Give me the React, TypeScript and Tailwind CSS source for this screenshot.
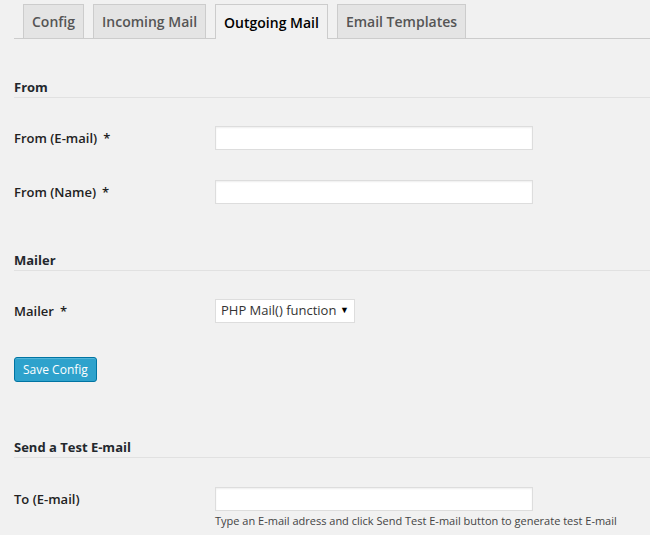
import * as React from 'react';

const font = { fontFamily: '"Open Sans", "Noto Sans", sans-serif' };

const tabs = ['Config', 'Incoming Mail', 'Outgoing Mail', 'Email Templates'];

function SectionHeading({ title, className = '' }: { title: string; className?: string }) {
  return (
    <h3 className={`border-b border-[#e1e1e1] pb-[1px] text-[13px] font-bold leading-[18px] text-[#23282d] ${className}`}>
      {title}
    </h3>
  );
}

function FieldRow({
  label,
  required,
  children,
  className = '',
}: {
  label: string;
  required?: boolean;
  children: React.ReactNode;
  className?: string;
}) {
  return (
    <div className={`flex items-start ${className}`}>
      <label className="w-[201px] shrink-0 pt-[3px] text-[13px] font-semibold leading-[18px] text-[#222]">
        {label}
        {required && <span className="ml-[6px]">*</span>}
      </label>
      <div className="flex flex-col">{children}</div>
    </div>
  );
}

function TextInput() {
  return (
    <input
      type="text"
      className="h-[24px] w-[318px] border border-[#dddddd] bg-white px-2 text-[13px] outline-none shadow-[inset_0_1px_2px_rgba(0,0,0,0.07)]"
    />
  );
}

export default function App() {
  const [active, setActive] = React.useState('Outgoing Mail');

  return (
    <div style={font} className="min-h-[535px] w-[650px] overflow-hidden bg-[#f1f1f1] pl-[14px]">
      {/* Tabs */}
      <div className="flex items-end border-b border-[#cccccc] pl-[9px] pt-[4px]">
        {tabs.map((tab) => {
          const isActive = tab === active;
          return (
            <button
              key={tab}
              onClick={() => setActive(tab)}
              className={
                isActive
                  ? 'mr-[9px] -mb-px h-[35px] border border-b-0 border-[#cccccc] bg-[#f1f1f1] px-[8px] text-[14px] font-semibold text-black'
                  : 'mr-[9px] h-[34px] border border-b-0 border-[#cccccc] bg-[#e4e4e4] px-[8px] text-[14px] font-semibold text-[#555]'
              }
            >
              {tab}
            </button>
          );
        })}
      </div>

      {/* From */}
      <SectionHeading title="From" className="mt-[39px]" />
      <FieldRow label="From (E-mail)" required className="mt-[28px]">
        <TextInput />
      </FieldRow>
      <FieldRow label="From (Name)" required className="mt-[30px]">
        <TextInput />
      </FieldRow>

      {/* Mailer */}
      <SectionHeading title="Mailer" className="mt-[47px]" />
      <FieldRow label="Mailer" required className="mt-[28px]">
        <div className="relative flex h-[24px] w-[140px] items-center border border-[#dddddd] bg-white pl-[5px] text-[13px] text-[#333]">
          PHP Mail() function
          <span className="absolute right-[5px] top-[3px] text-[9px] text-black">▼</span>
        </div>
      </FieldRow>

      <button className="mt-[34px] h-[25px] rounded-[3px] border border-[#0074a2] bg-[#2ea2cc] px-[8px] text-[12px] leading-[22px] text-white shadow-[inset_0_1px_0_rgba(120,200,230,0.5)]">
        Save Config
      </button>

      {/* Test email */}
      <SectionHeading title="Send a Test E-mail" className="mt-[56px]" />
      <FieldRow label="To (E-mail)" className="mt-[29px]">
        <TextInput />
        <p className="mt-[2px] whitespace-nowrap text-[11px] leading-[16px] text-[#444]">
          Type an E-mail adress and click Send Test E-mail button to generate test E-mail
        </p>
      </FieldRow>
    </div>
  );
}
